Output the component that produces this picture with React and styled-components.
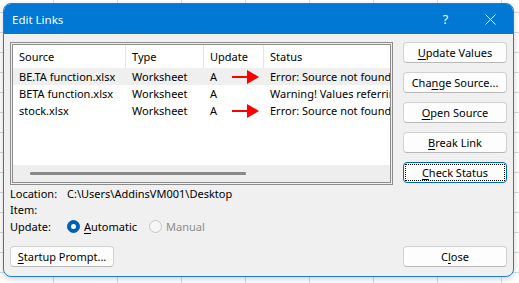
import React from "react";
import styled, { createGlobalStyle } from "styled-components";

const GlobalStyle = createGlobalStyle`
  html, body {
    margin: 0;
    padding: 0;
  }
  body {
    width: 519px;
    height: 283px;
    overflow: hidden;
    padding: 3px 0 0 3px;
    box-sizing: border-box;
    background-color: #ffffff;
    background-image:
      linear-gradient(to right, #d9d9d9 1px, transparent 1px),
      linear-gradient(to bottom, #d9d9d9 1px, transparent 1px);
    background-size: 64px 20px;
    background-position: 53px 12px;
    font-family: "Segoe UI", "Noto Sans", sans-serif;
    font-size: 11px;
    color: #000;
  }
`;

const Dialog = styled.div`
  width: 511px;
  height: 274px;
  box-sizing: border-box;
  border: 1px solid #1a80d6;
  border-radius: 8px;
  overflow: hidden;
  background: #f0f0f0;
  display: flex;
  flex-direction: column;
  box-shadow: 0 2px 6px rgba(0, 0, 0, 0.18);
`;

const TitleBar = styled.div`
  height: 30px;
  flex-shrink: 0;
  background: #0078d4;
  color: #fff;
  display: flex;
  align-items: center;
  padding-left: 8px;
`;

const Title = styled.div`
  flex: 1;
  font-size: 11.5px;
`;

const TitleButton = styled.div`
  width: 45px;
  height: 30px;
  display: flex;
  align-items: center;
  justify-content: center;
  font-size: 12.5px;
  color: #fff;
`;

const Body = styled.div`
  flex: 1;
  display: flex;
  flex-direction: column;
  padding: 8px 6px 9px 6px;
`;

const TopRow = styled.div`
  display: flex;
  gap: 10px;
`;

const ListOuter = styled.div`
  width: 384px;
  height: 143px;
  box-sizing: border-box;
  border: 1px solid #8c8c8c;
  padding: 1px;
  display: flex;
`;

const ListInner = styled.div`
  flex: 1;
  border: 1px solid #8c8c8c;
  background: #fff;
  display: flex;
  flex-direction: column;
  overflow: hidden;
`;

const HeaderRow = styled.div`
  display: grid;
  grid-template-columns: 113px 78px 60px 1fr;
  height: 23px;
  flex-shrink: 0;
`;

const HeaderCell = styled.div`
  display: flex;
  align-items: center;
  padding-left: 6px;
  border-right: ${(p) => (p.$last ? "none" : "1px solid #e5e5e5")};
  white-space: nowrap;
`;

const Row = styled.div`
  position: relative;
  display: grid;
  grid-template-columns: 113px 78px 60px 1fr;
  height: 17px;
  background: ${(p) => (p.$selected ? "#efefef" : "transparent")};
`;

const Cell = styled.div`
  display: flex;
  align-items: center;
  padding-left: 6px;
  white-space: nowrap;
  overflow: hidden;
`;

const Arrow = styled.svg`
  position: absolute;
  left: 219px;
  top: 2px;
`;

const Spacer = styled.div`
  flex: 1;
`;

const ScrollTrack = styled.div`
  height: 17px;
  flex-shrink: 0;
  background: #eeeeee;
  display: flex;
  align-items: center;
  padding-left: 17px;
`;

const ScrollThumb = styled.div`
  width: 216px;
  height: 3px;
  background: #8a8a8a;
  border-radius: 1px;
`;

const ButtonColumn = styled.div`
  width: 104px;
  display: flex;
  flex-direction: column;
  gap: 9px;
`;

const Button = styled.div`
  position: relative;
  width: 104px;
  height: 21px;
  box-sizing: border-box;
  background: #fdfdfd;
  border: 1px solid ${(p) => (p.$focused ? "#0067c0" : "#d0d0d0")};
  border-bottom-color: ${(p) => (p.$focused ? "#0067c0" : "#b8b8b8")};
  border-radius: 4px;
  display: flex;
  align-items: center;
  justify-content: center;
  white-space: nowrap;
  ${(p) =>
    p.$focused &&
    `
    &::after {
      content: "";
      position: absolute;
      inset: 1px;
      border: 1px dotted #000;
      border-radius: 1px;
    }
  `}
`;

const Key = styled.span`
  text-decoration: underline;
  text-underline-offset: 2px;
`;

const InfoBlock = styled.div`
  display: flex;
  flex-direction: column;
`;

const InfoLine = styled.div`
  display: flex;
  align-items: center;
  height: ${(p) => p.$h || 16}px;
`;

const InfoLabel = styled.div`
  width: 57px;
`;

const Radio = styled.div`
  display: flex;
  align-items: center;
  gap: 4px;
  margin-right: 12px;
  color: ${(p) => (p.$disabled ? "#8d8d8d" : "#000")};
`;

const RadioCircle = styled.div`
  width: 13px;
  height: 13px;
  box-sizing: border-box;
  border-radius: 50%;
  background: ${(p) => (p.$checked ? "#005fb8" : "#f6f6f6")};
  border: 1px solid ${(p) => (p.$checked ? "#005fb8" : "#c6c6c6")};
  display: flex;
  align-items: center;
  justify-content: center;
  &::after {
    content: "";
    display: ${(p) => (p.$checked ? "block" : "none")};
    width: 5px;
    height: 5px;
    border-radius: 50%;
    background: #fff;
  }
`;

const BottomRow = styled.div`
  display: flex;
  justify-content: space-between;
`;

const rows = [
  { source: "BE.TA function.xlsx", type: "Worksheet", update: "A", status: "Error: Source not found", selected: true, arrow: true },
  { source: "BETA function.xlsx", type: "Worksheet", update: "A", status: "Warning! Values referring to other workbooks" },
  { source: "stock.xlsx", type: "Worksheet", update: "A", status: "Error: Source not found", arrow: true },
];

function RedArrow() {
  return (
    <Arrow width="28" height="14" viewBox="0 0 28 14">
      <rect x="0" y="6" width="17" height="2" fill="#ff0000" />
      <polygon points="15,0 27,7 15,14" fill="#ff0000" />
    </Arrow>
  );
}

function App() {
  return (
    <>
      <GlobalStyle />
      <Dialog>
        <TitleBar>
          <Title>Edit Links</Title>
          <TitleButton>?</TitleButton>
          <TitleButton>
            <svg width="11" height="11" viewBox="0 0 11 11">
              <path d="M0.5 0.5 L10.5 10.5 M10.5 0.5 L0.5 10.5" stroke="#fff" strokeWidth="1" />
            </svg>
          </TitleButton>
        </TitleBar>
        <Body>
          <TopRow>
            <ListOuter>
              <ListInner>
                <HeaderRow>
                  <HeaderCell>Source</HeaderCell>
                  <HeaderCell>Type</HeaderCell>
                  <HeaderCell>Update</HeaderCell>
                  <HeaderCell $last>Status</HeaderCell>
                </HeaderRow>
                {rows.map((r) => (
                  <Row key={r.source} $selected={r.selected}>
                    <Cell>{r.source}</Cell>
                    <Cell>{r.type}</Cell>
                    <Cell>{r.update}</Cell>
                    <Cell>{r.status}</Cell>
                    {r.arrow && <RedArrow />}
                  </Row>
                ))}
                <Spacer />
                <ScrollTrack>
                  <ScrollThumb />
                </ScrollTrack>
              </ListInner>
            </ListOuter>
            <ButtonColumn>
              <Button><span><Key>U</Key>pdate Values</span></Button>
              <Button><span>Cha<Key>n</Key>ge Source...</span></Button>
              <Button><span><Key>O</Key>pen Source</span></Button>
              <Button><span><Key>B</Key>reak Link</span></Button>
              <Button $focused><span><Key>C</Key>heck Status</span></Button>
            </ButtonColumn>
          </TopRow>
          <InfoBlock>
            <InfoLine>
              <InfoLabel>Location:</InfoLabel>
              <span>C:\Users\AddinsVM001\Desktop</span>
            </InfoLine>
            <InfoLine>
              <InfoLabel>Item:</InfoLabel>
            </InfoLine>
            <InfoLine $h={18}>
              <InfoLabel>Update:</InfoLabel>
              <Radio>
                <RadioCircle $checked />
                <span><Key>A</Key>utomatic</span>
              </Radio>
              <Radio $disabled>
                <RadioCircle />
                <span>Manual</span>
              </Radio>
            </InfoLine>
          </InfoBlock>
          <Spacer />
          <BottomRow>
            <Button><span><Key>S</Key>tartup Prompt...</span></Button>
            <Button><span>C<Key>l</Key>ose</span></Button>
          </BottomRow>
        </Body>
      </Dialog>
    </>
  );
}

export default App;
